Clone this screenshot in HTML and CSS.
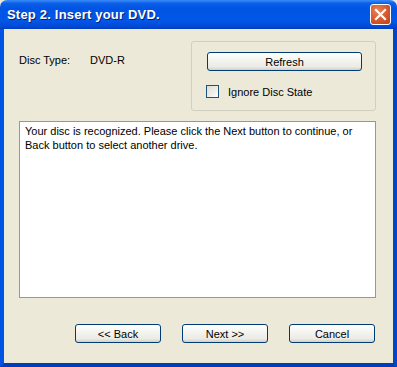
FILE: index.html
```html
<!DOCTYPE html>
<html lang="en">
<head>
    <meta charset="UTF-8">
    <title>Step 2. Insert your DVD.</title>
    <link rel="stylesheet" href="styles.css">
</head>
<body>
    <div class="window">
        <!-- Title bar -->
        <div class="titlebar">
            <span class="title">Step 2. Insert your DVD.</span>
            <div class="close">
                <svg width="13" height="13" viewBox="0 0 13 13">
                    <path d="M2 2 L11 11 M11 2 L2 11" stroke="#fff" stroke-width="2.2" stroke-linecap="square"/>
                </svg>
            </div>
        </div>

        <div class="content">
            <div class="top-row">
                <div class="disc-info">
                    <span class="disc-label">Disc Type:</span>
                    <span class="disc-value">DVD-R</span>
                </div>
                <div class="group">
                    <button class="btn refresh">Refresh</button>
                    <label class="check">
                        <span class="box"></span>
                        Ignore Disc State
                    </label>
                </div>
            </div>

            <div class="message">Your disc is recognized. Please click the Next button to continue, or Back button to select another drive.</div>

            <div class="buttons">
                <button class="btn nav">&lt;&lt; Back</button>
                <button class="btn nav">Next &gt;&gt;</button>
                <button class="btn nav">Cancel</button>
            </div>
        </div>
    </div>
</body>
</html>
```

FILE: styles.css
```css
body {
    margin: 0;
    font-family: "Liberation Sans", Arial, sans-serif;
    font-size: 11px;
    background: #ece9d8;
}
.window {
    width: 397px;
    height: 367px;
    display: flex;
    flex-direction: column;
}
.titlebar {
    height: 29px;
    flex: none;
    display: flex;
    align-items: center;
    padding: 0 6px 0 7px;
    box-sizing: border-box;
    background: linear-gradient(to bottom, #3a8cf8 0%, #0a5fe8 12%, #0054e3 30%, #0157e8 70%, #0149d4 92%, #003dbb 100%);
    border-radius: 7px 7px 0 0;
}
.title {
    color: #fff;
    font-family: "Liberation Sans", Arial, sans-serif;
    font-weight: bold;
    font-size: 13px;
    text-shadow: 1px 1px 0 #0a1e6e;
    letter-spacing: 0.2px;
    flex: 1;
}
.close {
    width: 21px;
    height: 21px;
    box-sizing: border-box;
    border: 1px solid #fff;
    border-radius: 3px;
    background: radial-gradient(circle at 35% 30%, #e8845c 0%, #d85a2e 50%, #c0401a 100%);
    display: flex;
    align-items: center;
    justify-content: center;
}
.content {
    flex: 1;
    border-left: 4px solid #0054e3;
    border-right: 4px solid #0047c8;
    border-bottom: 4px solid #003dbb;
    padding: 12px 17px 0 15px;
    display: flex;
    flex-direction: column;
}
.top-row {
    display: flex;
    justify-content: space-between;
}
.disc-info {
    padding-top: 13px;
    display: flex;
    color: #000;
}
.disc-label {
    width: 71px;
}
.group {
    width: 185px;
    height: 70px;
    box-sizing: border-box;
    border: 1px solid #d0d0bf;
    border-radius: 3px;
    padding: 10px 13px 0 15px;
    display: flex;
    flex-direction: column;
    gap: 14px;
}
.btn {
    font-family: "Liberation Sans", Arial, sans-serif;
    font-size: 11px;
    color: #000;
    height: 19px;
    padding: 0;
    border: 1px solid #003c74;
    border-radius: 3px;
    background: linear-gradient(to bottom, #ffffff 0%, #f4f4f0 40%, #ecebe6 80%, #d6d0c5 100%);
}
.refresh {
    width: 155px;
}
.check {
    display: flex;
    align-items: center;
    gap: 9px;
    margin-left: -1px;
}
.box {
    width: 13px;
    height: 13px;
    box-sizing: border-box;
    border: 1px solid #1c5180;
    background: linear-gradient(135deg, #dcdcd7 0%, #f0f0ea 60%, #ffffff 100%);
}
.message {
    margin-top: 10px;
    height: 177px;
    box-sizing: border-box;
    background: #fff;
    border: 1px solid #7f9db9;
    padding: 2px 5px;
    line-height: 14px;
    color: #000;
}
.buttons {
    margin-top: 26px;
    display: flex;
    justify-content: flex-end;
    gap: 21px;
    padding-right: 1px;
}
.nav {
    width: 86px;
}
```
